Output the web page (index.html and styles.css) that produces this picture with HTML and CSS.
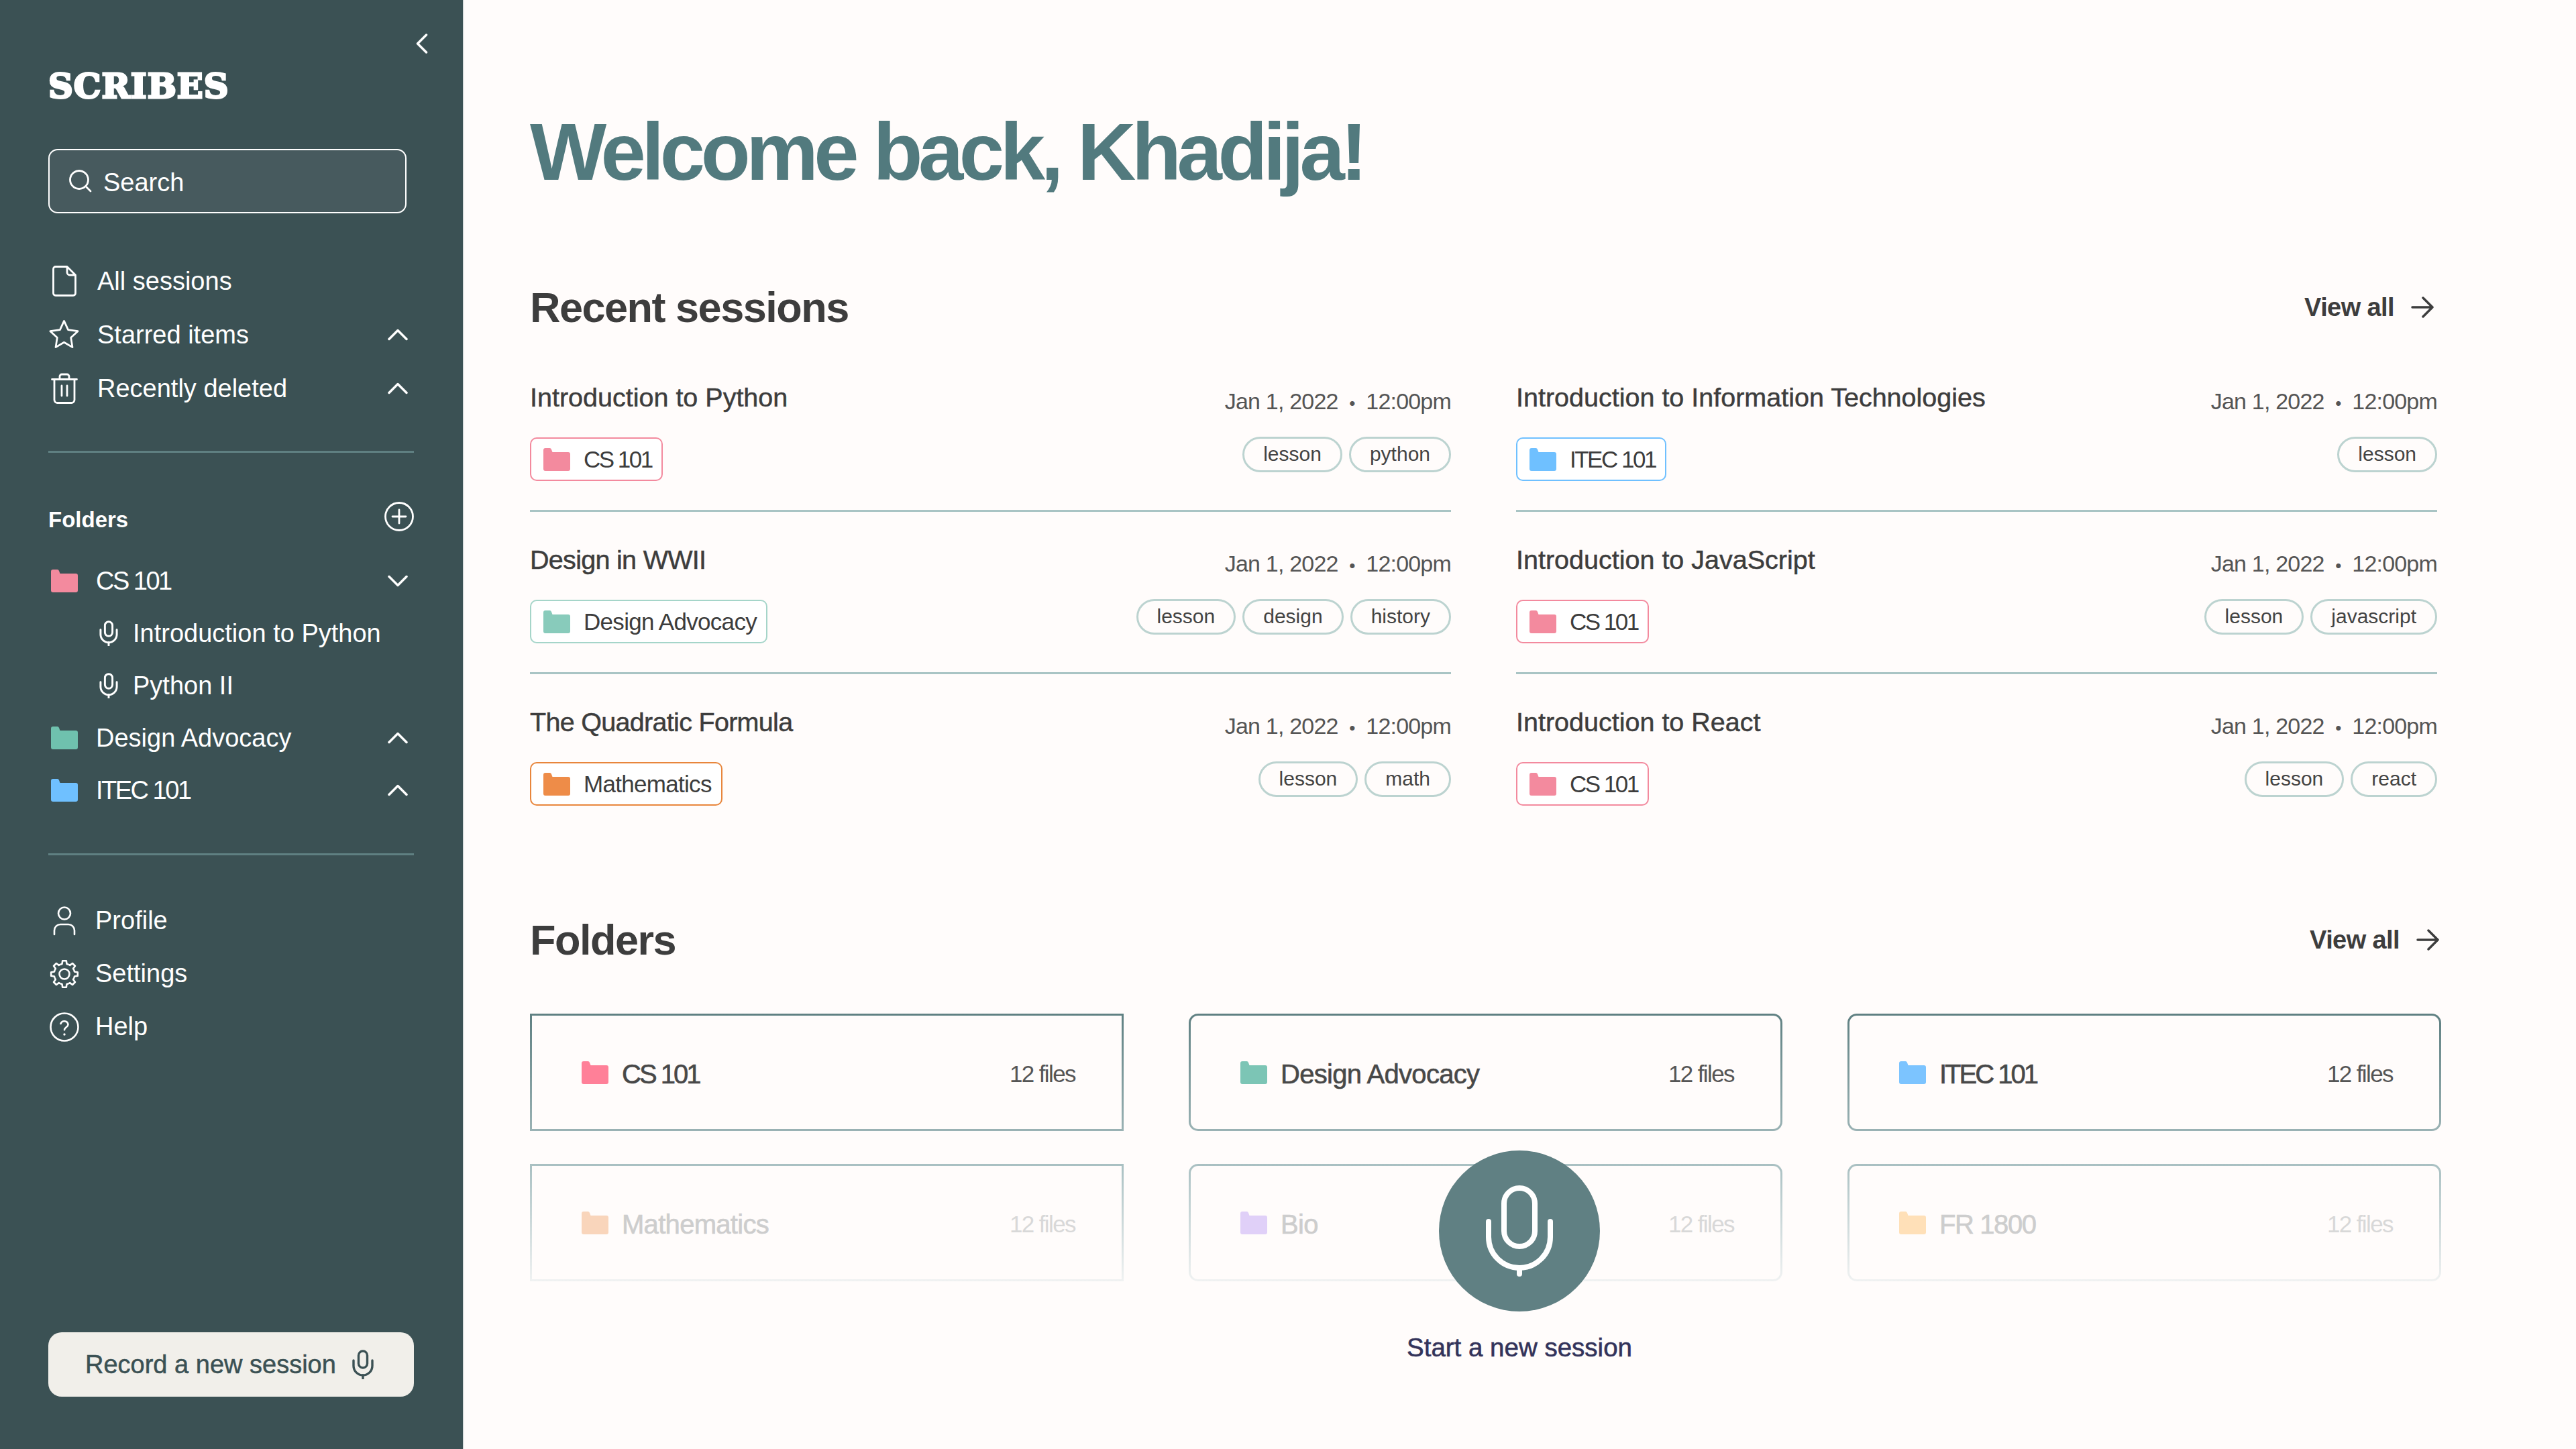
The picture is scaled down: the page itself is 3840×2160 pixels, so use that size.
FILE: index.html
```html
<!DOCTYPE html>
<html lang="en">
<head>
    <meta charset="UTF-8">
    <meta name="viewport" content="width=device-width, initial-scale=1.0">
    <title>Scribes</title>
    <link rel="stylesheet" href="styles.css">
</head>
<body>
    <svg class="defs" width="0" height="0">
        <symbol id="folder" viewBox="0 0 40 34">
            <path d="M0 3a3 3 0 0 1 3-3h6a3 3 0 0 1 3 2l1.500 4H37a3 3 0 0 1 3 3v22a3 3 0 0 1-3 3H3a3 3 0 0 1-3-3z" fill="currentColor"/>
        </symbol>
        <symbol id="mic" viewBox="0 0 32 44">
            <g fill="none" stroke="currentColor" stroke-width="3.400" stroke-linecap="round">
                <rect x="9.500" y="2" width="13" height="25" rx="6.500"/>
                <path d="M2 16v8a14 14 0 0 0 28 0v-8"/>
                <path d="M16 38v5"/>
            </g>
        </symbol>
        <symbol id="chev-up" viewBox="0 0 30 18">
            <path d="M2 15.500 15 2.500l13 13" fill="none" stroke="currentColor" stroke-width="3.500" stroke-linecap="round" stroke-linejoin="round"/>
        </symbol>
        <symbol id="chev-down" viewBox="0 0 30 18">
            <path d="M2 2.500 15 15.500l13-13" fill="none" stroke="currentColor" stroke-width="3.500" stroke-linecap="round" stroke-linejoin="round"/>
        </symbol>
        <symbol id="arrow" viewBox="0 0 34 34">
            <path d="M2 17h29M18 3l14 14-14 14" fill="none" stroke="currentColor" stroke-width="3.500" stroke-linecap="round" stroke-linejoin="round"/>
        </symbol>
    </svg>

    <div class="app">
        <aside class="sidebar">
            <div class="collapse">
                <svg width="18" height="30" viewBox="0 0 18 30"><path d="M15.500 2 2.500 15l13 13" fill="none" stroke="#fff" stroke-width="3.500" stroke-linecap="round" stroke-linejoin="round"/></svg>
            </div>
            <div class="logo">SCRIBES</div>
            <div class="search">
                <svg width="34" height="34" viewBox="0 0 34 34"><circle cx="15" cy="15" r="13.500" fill="none" stroke="#fff" stroke-width="2.800"/><path d="M26 26l6 6" stroke="#fff" stroke-width="2.800" stroke-linecap="round"/></svg>
                <span>Search</span>
            </div>

            <nav class="nav-top">
                <div class="nav-row">
                    <span class="nav-icon">
                        <svg width="36" height="46" viewBox="0 0 36 46"><path d="M5 1.500h17L34.500 14v27a3.500 3.500 0 0 1-3.500 3.500H5A3.500 3.500 0 0 1 1.500 41V5A3.500 3.500 0 0 1 5 1.500zM22 1.500V10a4 4 0 0 0 4 4h8.500" fill="none" stroke="#fff" stroke-width="2.800" stroke-linejoin="round"/></svg>
                    </span>
                    <span class="nav-label">All sessions</span>
                </div>
                <div class="nav-row">
                    <span class="nav-icon">
                        <svg width="48" height="48" viewBox="0 0 24 24"><path d="M12 1.500l3.090 6.760L22.500 9.270l-5.300 4.870 1.180 7.380L12 17.770l-6.380 3.750 1.180-7.380-5.300-4.870 7.410-1.010z" fill="none" stroke="#fff" stroke-width="1.400" stroke-linejoin="round"/></svg>
                    </span>
                    <span class="nav-label">Starred items</span>
                    <svg class="chev"><use href="#chev-up"/></svg>
                </div>
                <div class="nav-row">
                    <span class="nav-icon">
                        <svg width="40" height="46" viewBox="0 0 40 46"><path d="M1.500 9.500h37M13 9.500V5a3 3 0 0 1 3-3h8a3 3 0 0 1 3 3v4.500M5 9.500V40a4.500 4.500 0 0 0 4.500 4.500h21A4.500 4.500 0 0 0 35 40V9.500M16 19v15M24 19v15" fill="none" stroke="#fff" stroke-width="2.800" stroke-linecap="round" stroke-linejoin="round"/></svg>
                    </span>
                    <span class="nav-label">Recently deleted</span>
                    <svg class="chev"><use href="#chev-up"/></svg>
                </div>
            </nav>

            <div class="side-rule rule-one"></div>

            <div class="folders-head">
                <span>Folders</span>
                <svg width="44" height="44" viewBox="0 0 44 44"><circle cx="22" cy="22" r="20.500" fill="none" stroke="#fff" stroke-width="2.800"/><path d="M22 12v20M12 22h20" stroke="#fff" stroke-width="2.800" stroke-linecap="round"/></svg>
            </div>

            <div class="folder-tree">
                <div class="tree-row">
                    <svg class="tree-folder side-pink"><use href="#folder"/></svg>
                    <span class="tree-label code">CS 101</span>
                    <svg class="chev"><use href="#chev-down"/></svg>
                </div>
                <div class="tree-row tree-child">
                    <svg class="tree-mic"><use href="#mic"/></svg>
                    <span>Introduction to Python</span>
                </div>
                <div class="tree-row tree-child">
                    <svg class="tree-mic"><use href="#mic"/></svg>
                    <span>Python II</span>
                </div>
                <div class="tree-row">
                    <svg class="tree-folder side-teal"><use href="#folder"/></svg>
                    <span class="tree-label">Design Advocacy</span>
                    <svg class="chev"><use href="#chev-up"/></svg>
                </div>
                <div class="tree-row">
                    <svg class="tree-folder side-blue"><use href="#folder"/></svg>
                    <span class="tree-label code">ITEC 101</span>
                    <svg class="chev"><use href="#chev-up"/></svg>
                </div>
            </div>

            <div class="side-rule rule-two"></div>

            <nav class="nav-bottom">
                <div class="tree-row">
                    <span class="nav-icon">
                        <svg width="34" height="44" viewBox="0 0 34 44"><circle cx="17" cy="10.500" r="9" fill="none" stroke="#fff" stroke-width="2.600"/><path d="M2 42v-6a9 9 0 0 1 9-9h12a9 9 0 0 1 9 9v6" fill="none" stroke="#fff" stroke-width="2.600" stroke-linecap="round"/></svg>
                    </span>
                    <span class="tree-label">Profile</span>
                </div>
                <div class="tree-row">
                    <span class="nav-icon">
                        <svg width="44" height="44" viewBox="-22 -22 44 44">
                            <defs>
                                <path id="cog" d="M-5.930-14.320-3.500-15.100-2.800-19.800H2.800L3.500-15.100 5.930-14.320" fill="none" stroke="#fff" stroke-width="2.600" stroke-linejoin="round"/>
                            </defs>
                            <use href="#cog"/>
                            <use href="#cog" transform="rotate(45)"/>
                            <use href="#cog" transform="rotate(90)"/>
                            <use href="#cog" transform="rotate(135)"/>
                            <use href="#cog" transform="rotate(180)"/>
                            <use href="#cog" transform="rotate(225)"/>
                            <use href="#cog" transform="rotate(270)"/>
                            <use href="#cog" transform="rotate(315)"/>
                            <circle r="7.500" fill="none" stroke="#fff" stroke-width="2.600"/>
                        </svg>
                    </span>
                    <span class="tree-label">Settings</span>
                </div>
                <div class="tree-row">
                    <span class="nav-icon">
                        <svg width="44" height="44" viewBox="0 0 44 44"><circle cx="22" cy="22" r="20.500" fill="none" stroke="#fff" stroke-width="2.600"/><path d="M16.500 17a5.700 5.700 0 0 1 11 1.200c0 3.800-5.500 4.300-5.500 8" fill="none" stroke="#fff" stroke-width="2.600" stroke-linecap="round"/><circle cx="22" cy="33" r="1.700" fill="#fff"/></svg>
                    </span>
                    <span class="tree-label">Help</span>
                </div>
            </nav>

            <button class="record">
                <span>Record a new session</span>
                <svg class="record-mic"><use href="#mic"/></svg>
            </button>
        </aside>

        <main class="main">
            <h1>Welcome back, Khadija!</h1>

            <div class="section-head recent-head">
                <h2>Recent sessions</h2>
                <a class="view-all">View all <svg class="arrow"><use href="#arrow"/></svg></a>
            </div>

            <div class="sessions">
                <div class="session">
                    <div class="session-top">
                        <div class="session-title">Introduction to Python</div>
                        <div class="session-date">Jan 1, 2022 <i>•</i> 12:00pm</div>
                    </div>
                    <div class="session-bottom">
                        <span class="chip chip-pink"><svg class="chip-folder"><use href="#folder"/></svg><span class="code">CS 101</span></span>
                        <div class="tags"><span class="tag">lesson</span><span class="tag">python</span></div>
                    </div>
                </div>
                <div class="session">
                    <div class="session-top">
                        <div class="session-title">Introduction to Information Technologies</div>
                        <div class="session-date">Jan 1, 2022 <i>•</i> 12:00pm</div>
                    </div>
                    <div class="session-bottom">
                        <span class="chip chip-blue"><svg class="chip-folder"><use href="#folder"/></svg><span class="code">ITEC 101</span></span>
                        <div class="tags"><span class="tag">lesson</span></div>
                    </div>
                </div>
                <div class="session">
                    <div class="session-top">
                        <div class="session-title title-tight">Design in WWII</div>
                        <div class="session-date">Jan 1, 2022 <i>•</i> 12:00pm</div>
                    </div>
                    <div class="session-bottom">
                        <span class="chip chip-teal"><svg class="chip-folder"><use href="#folder"/></svg>Design Advocacy</span>
                        <div class="tags"><span class="tag">lesson</span><span class="tag">design</span><span class="tag">history</span></div>
                    </div>
                </div>
                <div class="session">
                    <div class="session-top">
                        <div class="session-title">Introduction to JavaScript</div>
                        <div class="session-date">Jan 1, 2022 <i>•</i> 12:00pm</div>
                    </div>
                    <div class="session-bottom">
                        <span class="chip chip-pink"><svg class="chip-folder"><use href="#folder"/></svg><span class="code">CS 101</span></span>
                        <div class="tags"><span class="tag">lesson</span><span class="tag">javascript</span></div>
                    </div>
                </div>
                <div class="session last">
                    <div class="session-top">
                        <div class="session-title title-tight">The Quadratic Formula</div>
                        <div class="session-date">Jan 1, 2022 <i>•</i> 12:00pm</div>
                    </div>
                    <div class="session-bottom">
                        <span class="chip chip-orange"><svg class="chip-folder"><use href="#folder"/></svg>Mathematics</span>
                        <div class="tags"><span class="tag">lesson</span><span class="tag">math</span></div>
                    </div>
                </div>
                <div class="session last">
                    <div class="session-top">
                        <div class="session-title">Introduction to React</div>
                        <div class="session-date">Jan 1, 2022 <i>•</i> 12:00pm</div>
                    </div>
                    <div class="session-bottom">
                        <span class="chip chip-pink"><svg class="chip-folder"><use href="#folder"/></svg><span class="code">CS 101</span></span>
                        <div class="tags"><span class="tag">lesson</span><span class="tag">react</span></div>
                    </div>
                </div>
            </div>

            <div class="section-head folders-title">
                <h2>Folders</h2>
                <a class="view-all">View all <svg class="arrow"><use href="#arrow"/></svg></a>
            </div>

            <div class="cards">
                <div class="card square">
                    <svg class="card-folder pink"><use href="#folder"/></svg>
                    <span class="card-name code">CS 101</span>
                    <span class="card-count">12 files</span>
                </div>
                <div class="card">
                    <svg class="card-folder teal"><use href="#folder"/></svg>
                    <span class="card-name">Design Advocacy</span>
                    <span class="card-count">12 files</span>
                </div>
                <div class="card">
                    <svg class="card-folder blue"><use href="#folder"/></svg>
                    <span class="card-name code">ITEC 101</span>
                    <span class="card-count">12 files</span>
                </div>
                <div class="card faded square">
                    <svg class="card-folder peach"><use href="#folder"/></svg>
                    <span class="card-name">Mathematics</span>
                    <span class="card-count">12 files</span>
                </div>
                <div class="card faded">
                    <svg class="card-folder lilac"><use href="#folder"/></svg>
                    <span class="card-name">Bio</span>
                    <span class="card-count">12 files</span>
                </div>
                <div class="card faded">
                    <svg class="card-folder sand"><use href="#folder"/></svg>
                    <span class="card-name code-mid">FR 1800</span>
                    <span class="card-count">12 files</span>
                </div>
            </div>

            <div class="new-session">
                <div class="new-circle">
                    <svg width="100" height="136" viewBox="0 0 100 136">
                        <g fill="none" stroke="#fff" stroke-width="8" stroke-linecap="round">
                            <rect x="27" y="4" width="46" height="87" rx="23"/>
                            <path d="M4 54v23a46 46 0 0 0 92 0V54"/>
                            <path d="M50 123v9"/>
                        </g>
                    </svg>
                </div>
                <div class="new-label">Start a new session</div>
            </div>
        </main>
    </div>
</body>
</html>
```

FILE: styles.css
```css
* {
    box-sizing: border-box;
}

body {
    margin: 0;
    background-color: #fffcfb;
    font-family: "Liberation Sans", Arial, sans-serif;
    color: #3d3d3d;
}

.defs {
    position: absolute;
}

.app {
    display: flex;
    height: 2160px;
    position: relative;
}

/* sidebar */
.sidebar {
    width: 692px;
    flex: none;
    display: flex;
    flex-direction: column;
    padding: 0 73px 0 72px;
    background-color: #3b5154;
    border-right: 2px solid #dfe3e3;
    color: #fff;
}

.collapse {
    display: flex;
    justify-content: flex-end;
    padding: 50px 0 0;
    margin-right: -21px;
    height: 98px;
}

.logo {
    height: 60px;
    font-family: "DejaVu Serif", serif;
    font-weight: bold;
    font-size: 51px;
    line-height: 60px;
    letter-spacing: 1px;
    -webkit-text-stroke: 3px #fff;
}

.search {
    display: flex;
    align-items: center;
    gap: 17px;
    width: 534px;
    height: 96px;
    margin-top: 64px;
    padding: 4px 0 0 29px;
    border: 2px solid #fff;
    border-radius: 14px;
    background-color: #475a5e;
    font-size: 38px;
}

.search svg {
    margin-top: -4px;
}

.nav-top {
    margin-top: 61px;
}

.nav-row,
.tree-row {
    display: flex;
    align-items: center;
    font-size: 38px;
}

.nav-row {
    height: 80px;
}

.nav-icon {
    width: 47px;
    flex: none;
    display: flex;
    justify-content: center;
}

.nav-label {
    margin-left: 26px;
    flex: 1;
}

.chev {
    width: 30px;
    height: 18px;
    flex: none;
    margin-right: 9px;
}

.side-rule {
    height: 3px;
    background-color: #5f8082;
}

.rule-one {
    margin-top: 53px;
}

.rule-two {
    margin-top: 55px;
}

.folders-head {
    display: flex;
    align-items: center;
    justify-content: space-between;
    height: 46px;
    margin-top: 72px;
    font-size: 33px;
    font-weight: bold;
}

.folders-head span {
    padding-top: 10px;
}

.folder-tree {
    margin-top: 34px;
}

.tree-row {
    height: 78px;
}

.tree-folder {
    width: 40px;
    height: 34px;
    flex: none;
    margin-left: 4px;
}

.side-pink { color: #f38a9e; }
.side-teal { color: #6fc1ae; }
.side-blue { color: #6fc0ff; }

.tree-label {
    flex: 1;
    margin-left: 27px;
}

.tree-label.code,
.code {
    letter-spacing: -2.500px;
}

.tree-child {
    padding-left: 76px;
}

.tree-mic {
    width: 28px;
    height: 38px;
    flex: none;
    margin-right: 22px;
}

.nav-bottom {
    margin-top: 58px;
}

.nav-bottom .tree-row {
    height: 79px;
}

.nav-bottom .tree-label {
    margin-left: 23px;
}

.record {
    display: flex;
    align-items: center;
    gap: 24px;
    height: 96px;
    margin-top: auto;
    margin-bottom: 78px;
    padding: 0 0 0 55px;
    border: none;
    border-radius: 20px;
    background-color: #f1efea;
    color: #3b5154;
    font-family: inherit;
    font-size: 38px;
    -webkit-text-stroke: 0.5px #3b5154;
}

.record-mic {
    width: 32px;
    height: 44px;
}

/* main column */
.main {
    flex: 1;
    padding: 156px 200px 0 98px;
}

h1 {
    margin: 0;
    font-size: 121px;
    line-height: 140px;
    font-weight: bold;
    letter-spacing: -6.400px;
    color: #527a7e;
}

h2 {
    margin: 0;
    font-size: 63px;
    line-height: 72px;
    font-weight: bold;
    letter-spacing: -1.500px;
    color: #3d3d3d;
}

.section-head {
    display: flex;
    align-items: center;
    justify-content: space-between;
}

.recent-head {
    margin-top: 126px;
    padding-right: 12px;
}

.folders-title {
    margin-top: 118px;
    padding-right: 4px;
}

.view-all {
    display: flex;
    align-items: center;
    gap: 25px;
    font-size: 38px;
    font-weight: bold;
    letter-spacing: -0.600px;
}

.arrow {
    width: 34px;
    height: 34px;
}

.sessions {
    display: grid;
    grid-template-columns: 1373px 1373px;
    column-gap: 97px;
    margin-top: 27px;
}

.session {
    height: 242px;
    padding-top: 49px;
    border-bottom: 3px solid #a9c4c4;
}

.session.last {
    border-bottom: none;
}

.session-top,
.session-bottom {
    display: flex;
    justify-content: space-between;
    align-items: flex-start;
}

.session-title {
    font-size: 39.500px;
    line-height: 44px;
    -webkit-text-stroke: 0.5px #3d3d3d;
}

.title-tight {
    letter-spacing: -0.700px;
}

.session-date {
    margin-top: 6px;
    font-size: 34px;
    line-height: 44px;
    letter-spacing: -0.800px;
    color: #555;
}

.session-date i {
    font-style: normal;
    font-size: 26px;
    margin: 0 8px;
}

.session-bottom {
    margin-top: 28px;
}

.chip {
    display: flex;
    align-items: center;
    height: 65px;
    margin-top: 1px;
    padding: 0 14px 0 18px;
    border: 2.500px solid;
    border-radius: 10px;
    background-color: #fff;
    font-size: 35px;
    letter-spacing: -0.700px;
    color: #3d3d3d;
}

.chip-folder {
    width: 40px;
    height: 34px;
    margin-right: 20px;
}

.chip-pink { border-color: #f38a9e; }
.chip-pink .chip-folder { color: #f38a9e; }
.chip-blue { border-color: #6fc0ff; }
.chip-blue .chip-folder { color: #6fc0ff; }
.chip-teal { border-color: #a5d5c9; }
.chip-teal .chip-folder { color: #88cbbb; }
.chip-orange { border-color: #e8863c; }
.chip-orange .chip-folder { color: #ee8c48; }

.tags {
    display: flex;
    gap: 10px;
}

.tag {
    height: 53px;
    padding: 0 28px;
    border: 3px solid #bcd3d0;
    border-radius: 27px;
    font-size: 30px;
    line-height: 46px;
    color: #444;
}

/* folder cards */
.cards {
    display: grid;
    grid-template-columns: repeat(3, 885px);
    column-gap: 97px;
    row-gap: 49px;
    margin-top: 74px;
}

.card {
    display: flex;
    align-items: center;
    height: 175px;
    padding: 0 69px 0 74px;
    border: 3px solid transparent;
    border-radius: 14px;
    background: linear-gradient(#fffcfb, #fffcfb) padding-box,
        linear-gradient(#5f8082, #9ab2b4) border-box;
}

.card.square {
    border-radius: 0;
}

.card.faded {
    background: linear-gradient(#fffcfb, #fffcfb) padding-box,
        linear-gradient(#a9c0c2, #f0f2f2) border-box;
}

.card-folder {
    width: 40px;
    height: 34px;
    flex: none;
}

.pink { color: #ff8098; }
.teal { color: #7cc5b5; }
.blue { color: #7cc4ff; }
.peach { color: #f9d5bb; }
.lilac { color: #e0d0f8; }
.sand { color: #ffe0b8; }

.card-name {
    flex: 1;
    margin-left: 20px;
    padding-top: 5px;
    font-size: 40px;
    letter-spacing: -0.700px;
    color: #484848;
    -webkit-text-stroke: 0.6px #484848;
}

.card-name.code {
    letter-spacing: -3px;
}

.card-name.code-mid {
    letter-spacing: -1.400px;
}

.card-count {
    padding-top: 5px;
    font-size: 35px;
    letter-spacing: -1.600px;
    color: #555;
}

.card.faded .card-name {
    color: #cdcdcd;
    -webkit-text-stroke-color: #cdcdcd;
}

.card.faded .card-count {
    color: #d8d8d8;
}

/* floating record button over the cards */
.new-session {
    position: absolute;
    left: 2025px;
    top: 1715px;
    width: 480px;
    display: flex;
    flex-direction: column;
    align-items: center;
}

.new-circle {
    display: flex;
    align-items: center;
    justify-content: center;
    width: 240px;
    height: 240px;
    border-radius: 50%;
    background-color: #608083;
}

.new-label {
    margin-top: 31px;
    font-size: 38.500px;
    line-height: 46px;
    color: #33335a;
    -webkit-text-stroke: 0.6px #33335a;
}
```
